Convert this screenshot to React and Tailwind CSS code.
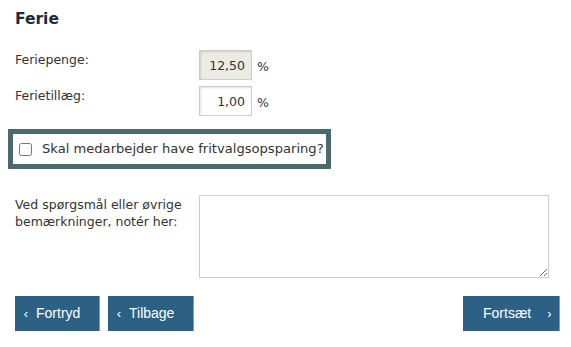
import { useState } from 'react'

const FONT = { fontFamily: 'Verdana, "DejaVu Sans", sans-serif' }

function PercentRow({ label, value, readOnly }) {
  return (
    <div className="flex items-start">
      <label className="w-[184px] pt-[1px] text-[12.5px] text-[#333]">{label}</label>
      <input
        type="text"
        defaultValue={value}
        readOnly={readOnly}
        className={`w-[53px] h-[30px] border border-[#ccc] px-[6px] text-right text-[12.5px] text-[#333] shadow-[inset_1px_1px_2px_rgba(0,0,0,0.12)] focus:outline-none ${
          readOnly ? 'bg-[#ebebe4]' : 'bg-white'
        }`}
      />
      <span className="ml-[5px] mt-[8px] text-[12.5px] text-[#333]">%</span>
    </div>
  )
}

export default function App() {
  const [fritvalg, setFritvalg] = useState(false)

  return (
    <div className="w-[571px] h-[347px] bg-white pt-[10px]" style={FONT}>
      {/* Ferie */}
      <h2 className="pl-[15px] text-[15.5px] font-bold text-[#1d2b3c] leading-[19px]">Ferie</h2>

      <div className="pl-[15px] mt-[21px] flex flex-col gap-[6px]">
        <PercentRow label="Feriepenge:" value="12,50" readOnly />
        <PercentRow label="Ferietillæg:" value="1,00" />
      </div>

      {/* Fritvalgsopsparing */}
      <label className="ml-[8px] mt-[13px] w-[323px] h-[40px] border-[5px] border-[#4b6a6e] flex items-center pl-[6px] cursor-pointer">
        <input
          type="checkbox"
          checked={fritvalg}
          onChange={e => setFritvalg(e.target.checked)}
          className="w-[13px] h-[13px] m-0"
        />
        <span className="ml-[10px] text-[13.1px] text-[#333]">Skal medarbejder have fritvalgsopsparing?</span>
      </label>

      {/* Bemærkninger */}
      <div className="pl-[15px] mt-[26px] flex items-start">
        <label className="w-[184px] pt-[1px] text-[12.5px] leading-[17px] text-[#333]">
          Ved spørgsmål eller øvrige bemærkninger, notér her:
        </label>
        <textarea className="w-[350px] h-[83px] border border-[#ccc] bg-white resize focus:outline-none" />
      </div>

      {/* Knapper */}
      <div
        className="px-[15px] mt-[18px] flex items-center justify-between text-[14px] text-white"
        style={{ fontFamily: '"Liberation Sans", Arial, sans-serif' }}
      >
        <div className="flex gap-[8px]">
          <button className="w-[85px] h-[35px] bg-[#2c6185] border-r border-[#7e9db3] flex items-center pl-[5px]">
            <span className="w-[12px] text-[13px]">‹</span>
            <span className="ml-[4px]">Fortryd</span>
          </button>
          <button className="w-[86px] h-[35px] bg-[#2c6185] border-r border-[#7e9db3] flex items-center pl-[5px]">
            <span className="w-[12px] text-[13px]">‹</span>
            <span className="ml-[4px]">Tilbage</span>
          </button>
        </div>
        <button className="mr-[-4px] w-[97px] h-[35px] bg-[#2c6185] border-r border-[#7e9db3] flex items-center pl-[20px]">
          <span>Fortsæt</span>
          <span className="ml-[16px] text-[13px]">›</span>
        </button>
      </div>
    </div>
  )
}
